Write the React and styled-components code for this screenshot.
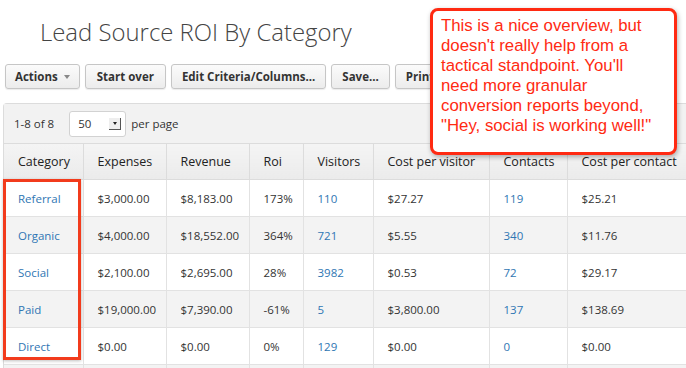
import React from 'react';
import styled, { createGlobalStyle } from 'styled-components';

const GlobalStyle = createGlobalStyle`
  html, body {
    margin: 0;
    padding: 0;
    background: #fff;
    overflow: hidden;
  }
  body {
    font-family: 'Open Sans', 'DejaVu Sans', sans-serif;
    color: #333;
  }
`;

const Page = styled.div`
  position: relative;
  width: 686px;
  height: 368px;
  overflow: hidden;
`;

const Title = styled.h1`
  margin: 0;
  padding: 15px 0 0 40px;
  height: 48px;
  box-sizing: border-box;
  font-size: 23.9px;
  font-weight: 300;
  color: #444;
`;

const Toolbar = styled.div`
  display: flex;
  gap: 5px;
  padding: 16px 0 0 5px;
  height: 25px;
`;

const Button = styled.button`
  display: flex;
  align-items: center;
  gap: 6px;
  height: 25px;
  padding: 0 ${(p) => p.$pad || 10}px;
  font-family: 'Open Sans', sans-serif;
  font-size: 11.5px;
  font-weight: 700;
  color: #333;
  background: linear-gradient(#fbfbfb, #ececec);
  border: 1px solid #c6c6c6;
  border-radius: 3px;
  box-shadow: 0 1px 1px rgba(0, 0, 0, 0.08);
  white-space: nowrap;
`;

const Caret = styled.span`
  width: 0;
  height: 0;
  border-left: 3px solid transparent;
  border-right: 3px solid transparent;
  border-top: 4px solid #888;
`;

const Panel = styled.div`
  margin: 14px 0 0 3px;
  border: 1px solid #dcdcdc;
  border-right: none;
  border-radius: 4px 0 0 0;
  background: #fff;
`;

const PagerBar = styled.div`
  display: flex;
  align-items: center;
  height: 39px;
  padding-left: 10px;
  background: #f2f2f2;
  border-bottom: 1px solid #dcdcdc;
  font-size: 11.5px;
  color: #333;
`;

const Select = styled.div`
  display: flex;
  align-items: center;
  justify-content: space-between;
  box-sizing: border-box;
  width: 57px;
  height: 26px;
  margin: 0 5px 0 15px;
  padding: 0 4px 0 8px;
  background: #fff;
  border: 1px solid #d2d2d2;
  border-radius: 3px;
`;

const SelectArrow = styled.span`
  display: flex;
  align-items: center;
  justify-content: center;
  width: 11px;
  height: 11px;
  border-right: 1px solid #555;
  border-bottom: 1px solid #555;
  background: #eee;
  &::after {
    content: '';
    border-left: 2.5px solid transparent;
    border-right: 2.5px solid transparent;
    border-top: 3px solid #222;
  }
`;

const Table = styled.table`
  border-collapse: collapse;
  table-layout: fixed;
  width: 740px;
  font-size: 11.5px;
`;

const Th = styled.th`
  height: 35px;
  padding: 0 0 0 14px;
  text-align: left;
  font-weight: 400;
  font-size: 12.5px;
  color: #222;
  background: linear-gradient(#f4f4f4, #ebebeb);
  border-right: 1px solid #dcdcdc;
  border-bottom: 1px solid #dcdcdc;
  white-space: nowrap;
`;

const Row = styled.tr`
  background: ${(p) => (p.$alt ? '#f3f3f3' : '#fff')};
`;

const Td = styled.td`
  height: 36px;
  padding: 0 0 0 14px;
  border-right: 1px solid #e2e2e2;
  border-bottom: 1px solid #e2e2e2;
  color: ${(p) => (p.$link ? '#2f76b3' : '#333')};
  white-space: nowrap;
`;

const Highlight = styled.div`
  position: absolute;
  left: 3px;
  top: 179px;
  width: 72px;
  height: 175px;
  border: 3px solid #f23b1c;
  box-shadow: 0 1px 3px rgba(0, 0, 0, 0.25);
`;

const Callout = styled.div`
  position: absolute;
  left: 430px;
  top: 8px;
  width: 247px;
  height: 147px;
  padding: 5px 0 0 8px;
  box-sizing: border-box;
  background: #fff;
  border: 3px solid #ff2a12;
  border-radius: 8px;
  box-shadow: 1px 2px 5px rgba(0, 0, 0, 0.3);
  font-family: 'Liberation Sans', Arial, sans-serif;
  font-size: 16.8px;
  line-height: 20px;
  color: #ff2a12;
`;

const columns = [
  ['Category', 79],
  ['Expenses', 83],
  ['Revenue', 83],
  ['Roi', 54],
  ['Visitors', 70],
  ['Cost per visitor', 116],
  ['Contacts', 78],
  ['Cost per contact', 177],
];

const rows = [
  ['Referral', '$3,000.00', '$8,183.00', '173%', '110', '$27.27', '119', '$25.21'],
  ['Organic', '$4,000.00', '$18,552.00', '364%', '721', '$5.55', '340', '$11.76'],
  ['Social', '$2,100.00', '$2,695.00', '28%', '3982', '$0.53', '72', '$29.17'],
  ['Paid', '$19,000.00', '$7,390.00', '-61%', '5', '$3,800.00', '137', '$138.69'],
  ['Direct', '$0.00', '$0.00', '0%', '129', '$0.00', '0', '$0.00'],
  ['', '', '', '', '', '', '', ''],
];

const linkCols = [0, 4, 6];

const App = () => {
  return (
    <Page>
      <GlobalStyle />
      <Title>Lead Source ROI By Category</Title>
      <Toolbar>
        <Button $pad={9}>
          Actions <Caret />
        </Button>
        <Button $pad={11}>Start over</Button>
        <Button $pad={10}>Edit Criteria/Columns...</Button>
        <Button $pad={10}>Save...</Button>
        <Button>Print</Button>
      </Toolbar>
      <Panel>
        <PagerBar>
          1-8 of 8
          <Select>
            50 <SelectArrow />
          </Select>
          per page
        </PagerBar>
        <Table>
          <colgroup>
            {columns.map(([name, w]) => (
              <col key={name} style={{ width: w }} />
            ))}
          </colgroup>
          <thead>
            <tr>
              {columns.map(([name]) => (
                <Th key={name}>{name}</Th>
              ))}
            </tr>
          </thead>
          <tbody>
            {rows.map((row, i) => (
              <Row key={i} $alt={i % 2 === 1}>
                {row.map((cell, j) => (
                  <Td key={j} $link={linkCols.includes(j)}>
                    {cell}
                  </Td>
                ))}
              </Row>
            ))}
          </tbody>
        </Table>
      </Panel>
      <Highlight />
      <Callout>
        This is a nice overview, but
        <br />
        doesn't really help from a
        <br />
        tactical standpoint. You'll
        <br />
        need more granular
        <br />
        conversion reports beyond,
        <br />
        "Hey, social is working well!"
      </Callout>
    </Page>
  );
};

export default App;
